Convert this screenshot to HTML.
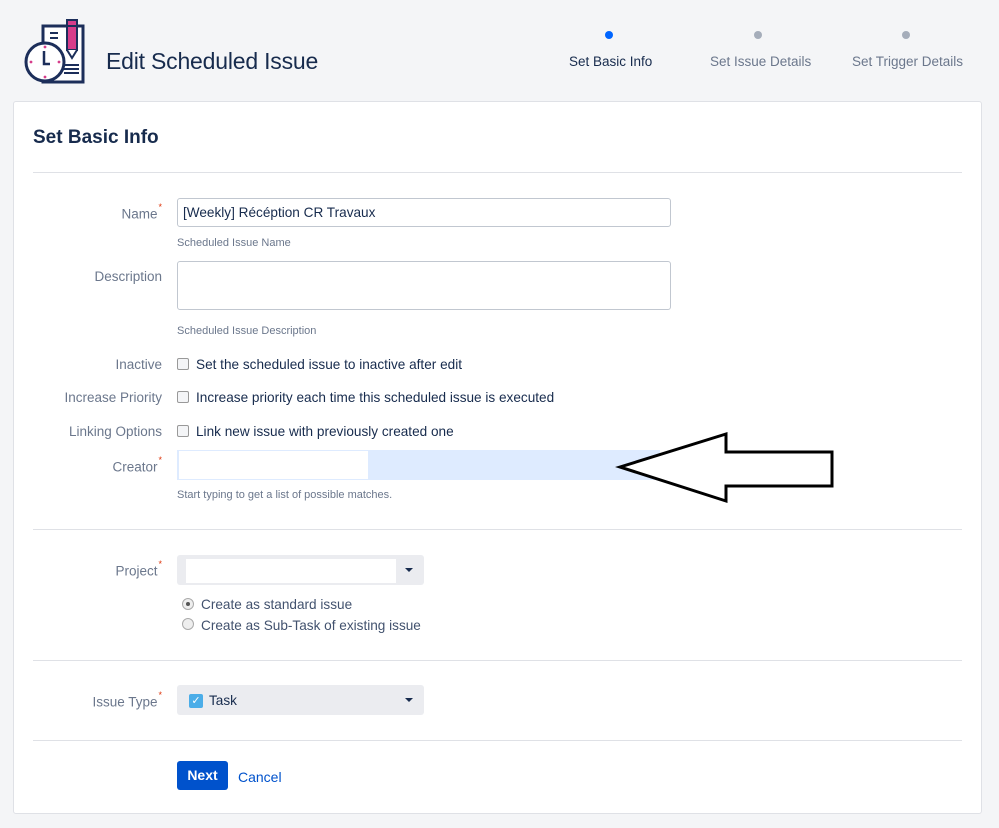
<!DOCTYPE html>
<html><head><meta charset="utf-8"><style>
*{box-sizing:border-box;margin:0;padding:0}
body{width:999px;height:828px;background:#f4f5f7;font-family:"Liberation Sans",sans-serif;position:relative;overflow:hidden;color:#172b4d}
.a{position:absolute}
.lbl{position:absolute;right:837px;font-size:13.5px;color:#6b778c;white-space:nowrap}
.lbl sup{color:#de350b;font-size:9px;position:relative;top:-3px;margin-left:1px}
.inp{position:absolute;left:177px;width:494px;background:#fff;border:1px solid #c1c7d0;border-radius:3px}
.hint{position:absolute;left:177px;font-size:11px;color:#6b778c}
.cb{position:absolute;left:177px;width:12px;height:12px;border:1px solid #999;border-radius:2px;background:#f4f5f7}
.ct{position:absolute;left:196px;font-size:13.6px;color:#172b4d;white-space:nowrap}
.hr{position:absolute;left:33px;width:929px;height:1px;background:#dfe1e6}
.step{position:absolute;top:54px;font-size:13.5px;color:#6b778c;white-space:nowrap}
.dot{position:absolute;top:31px;width:8px;height:8px;border-radius:50%;background:#a5adba}
.radio{position:absolute;left:182px;width:12px;height:12px;border-radius:50%;border:1px solid #aaa;background:#eee}
</style></head><body>
<svg class="a" style="left:0;top:0" width="100" height="100" viewBox="0 0 100 100">
<rect x="43" y="26" width="40" height="56" fill="#fff" stroke="#1c2e5a" stroke-width="3"/>
<line x1="50" y1="33" x2="58" y2="33" stroke="#1c2e5a" stroke-width="2"/>
<line x1="50" y1="38" x2="58" y2="38" stroke="#1c2e5a" stroke-width="2"/>
<line x1="64" y1="65" x2="79" y2="65" stroke="#1c2e5a" stroke-width="2"/>
<line x1="64" y1="69" x2="79" y2="69" stroke="#1c2e5a" stroke-width="2"/>
<line x1="64" y1="73" x2="79" y2="73" stroke="#1c2e5a" stroke-width="2"/>
<rect x="67" y="20" width="10" height="30" fill="#d63d8a" stroke="#1c2e5a" stroke-width="2"/>
<line x1="67" y1="26" x2="77" y2="26" stroke="#1c2e5a" stroke-width="2"/>
<path d="M67 50 L72 58 L77 50" fill="#fff" stroke="#1c2e5a" stroke-width="2"/>
<circle cx="45" cy="62" r="19" fill="#fff" stroke="#1c2e5a" stroke-width="3"/>
<path d="M44 51 V64 H50" fill="none" stroke="#1c2e5a" stroke-width="2.5"/>
<circle cx="45" cy="47" r="1.4" fill="#d63d8a"/><circle cx="45" cy="77" r="1.4" fill="#d63d8a"/>
<circle cx="31" cy="62" r="1.4" fill="#d63d8a"/><circle cx="59" cy="62" r="1.4" fill="#d63d8a"/>
</svg>
<div class="a" style="left:106px;top:48px;font-size:23px;color:#172b4d;letter-spacing:-0.2px">Edit Scheduled Issue</div>
<div class="dot" style="left:605px;background:#0065ff"></div>
<div class="dot" style="left:754px"></div>
<div class="dot" style="left:902px"></div>
<div class="step" style="left:569px;color:#172b4d">Set Basic Info</div>
<div class="step" style="left:710px">Set Issue Details</div>
<div class="step" style="left:852px">Set Trigger Details</div>

<div class="a" style="left:13px;top:101px;width:969px;height:713px;background:#fff;border:1px solid #dfe1e6;border-radius:3px"></div>
<div class="a" style="left:33px;top:127px;font-size:19px;font-weight:bold;color:#172b4d">Set Basic Info</div>
<div class="hr" style="top:172px"></div>

<div class="lbl" style="top:205px">Name<sup>*</sup></div>
<div class="inp" style="top:198px;height:29px;padding:6px 5px;font-size:13.6px;color:#172b4d">[Weekly] Récéption CR Travaux</div>
<div class="hint" style="top:237px">Scheduled Issue Name</div>
<div class="lbl" style="top:269px">Description</div>
<div class="inp" style="top:261px;height:49px"></div>
<div class="hint" style="top:325px">Scheduled Issue Description</div>

<div class="lbl" style="top:357px">Inactive</div><div class="cb" style="top:358px"></div><div class="ct" style="top:357px">Set the scheduled issue to inactive after edit</div>
<div class="lbl" style="top:390px">Increase Priority</div><div class="cb" style="top:391px"></div><div class="ct" style="top:390px">Increase priority each time this scheduled issue is executed</div>
<div class="lbl" style="top:424px">Linking Options</div><div class="cb" style="top:425px"></div><div class="ct" style="top:424px">Link new issue with previously created one</div>
<div class="lbl" style="top:458px">Creator<sup>*</sup></div>
<div class="a" style="left:177px;top:450px;width:483px;height:30px;background:#deebff"></div>
<div class="a" style="left:179px;top:451px;width:189px;height:28px;background:#fff"></div>
<div class="hint" style="top:489px">Start typing to get a list of possible matches.</div>
<div class="hr" style="top:529px"></div>

<div class="lbl" style="top:562px">Project<sup>*</sup></div>
<div class="a" style="left:177px;top:555px;width:247px;height:30px;background:#ebecf0;border-radius:3px"></div>
<div class="a" style="left:186px;top:559px;width:210px;height:24px;background:#fff"></div>
<div class="a" style="left:405px;top:568px;border-left:4px solid transparent;border-right:4px solid transparent;border-top:4px solid #172b4d"></div>
<div class="radio" style="top:598px"></div><div class="a" style="left:186px;top:602px;width:4px;height:4px;border-radius:50%;background:#555"></div>
<div class="ct" style="left:201px;top:597px;color:#42526e">Create as standard issue</div>
<div class="radio" style="top:618px"></div>
<div class="ct" style="left:201px;top:618px;color:#42526e">Create as Sub-Task of existing issue</div>
<div class="hr" style="top:660px"></div>

<div class="lbl" style="top:693px">Issue Type<sup>*</sup></div>
<div class="a" style="left:177px;top:685px;width:247px;height:30px;background:#ebecf0;border-radius:3px"></div>
<div class="a" style="left:189px;top:694px;width:14px;height:14px;background:#4bade8;border-radius:2px;color:#fff;font-size:11px;line-height:14px;text-align:center">✓</div>
<div class="ct" style="left:209px;top:693px">Task</div>
<div class="a" style="left:405px;top:698px;border-left:4px solid transparent;border-right:4px solid transparent;border-top:4px solid #172b4d"></div>
<div class="hr" style="top:740px"></div>

<div class="a" style="left:177px;top:761px;width:51px;height:29px;background:#0052cc;border-radius:3px;color:#fff;font-weight:bold;font-size:14px;line-height:29px;text-align:center">Next</div>
<div class="a" style="left:238px;top:769px;font-size:14px;color:#0052cc">Cancel</div>

<svg class="a" style="left:0;top:0" width="999" height="828">
<polygon points="620,467 726,434 726,452 832,452 832,486 726,486 726,501" fill="#fff" stroke="#000" stroke-width="3" stroke-linejoin="miter"/>
</svg>
</body></html>
